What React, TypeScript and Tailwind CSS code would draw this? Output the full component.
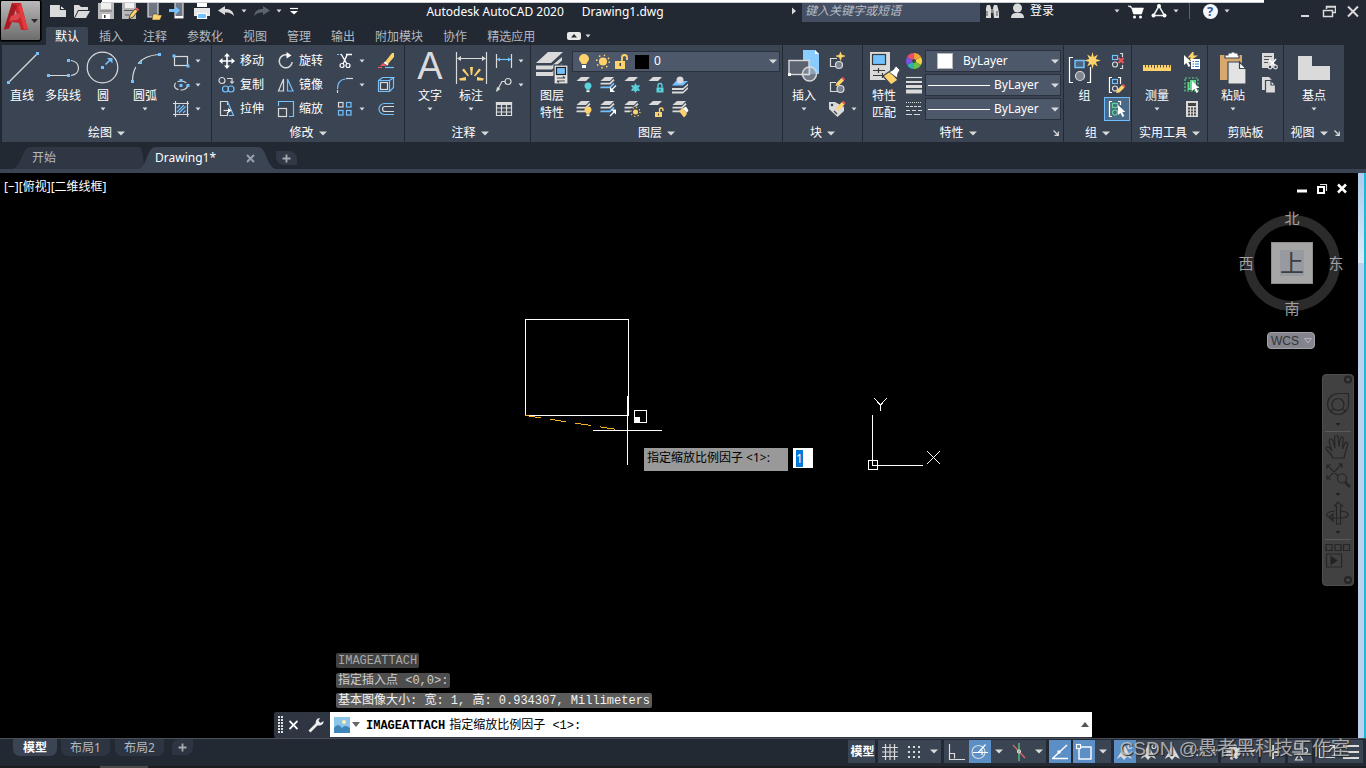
import { useEffect, useRef } from 'react'
import type { ReactNode } from 'react'
import clsx from 'clsx'

const BLUE = '#73c1ff'
const GREY = '#dadada'
const YELLOW = '#ffd36b'
const TEAL = '#5ad3dc'
const RED = '#f25555'
const GREEN = '#62d68a'
const PANEL = '#3b4453'

interface IcoProps {
  w?: number
  h?: number
  children: ReactNode
}

function Ico({ w = 20, h = 20, children }: IcoProps) {
  return (
    <svg
      width={w}
      height={h}
      viewBox={`0 0 ${w} ${h}`}
      fill="none"
      stroke={GREY}
      strokeWidth={1.2}
      className="shrink-0"
      aria-hidden="true"
    >
      {children}
    </svg>
  )
}

// Blue grip square
function Grip({ x, y }: { x: number; y: number }) {
  return <rect x={x - 1.5} y={y - 1.5} width={3} height={3} fill={BLUE} stroke="none" />
}

function Caret({ big }: { big?: boolean }) {
  return big ? (
    <Ico w={8} h={5}>
      <path d="M0 0.5h8l-4 4z" fill={GREY} stroke="none" />
    </Ico>
  ) : (
    <Ico w={6} h={4}>
      <path d="M0.5 0.5h5l-2.5 3z" fill={GREY} stroke="none" />
    </Ico>
  )
}

/* ---------- shared icon parts ---------- */

function Sheets({ x = 0, y = 0, bottom = GREY, count = 3 }: { x?: number; y?: number; bottom?: string; count?: number }) {
  return (
    <g transform={`translate(${x} ${y})`} strokeWidth={1.8}>
      <path d="M5 0h9l-4 4H0.500z" fill={GREY} stroke="none" />
      {count > 1 && <path d="M0.500 6.700h9.500l4-4" stroke={GREY} />}
      {count > 2 && <path d="M0.500 10.300h9.500l4-4" stroke={bottom} />}
    </g>
  )
}

function Bulb({ x, y, color }: { x: number; y: number; color: string }) {
  return (
    <g stroke="none">
      <path d={`M${x - 3.5} ${y}a3.500 3.500 0 1 1 7 0c0 1.800-1.800 2.200-1.800 3.800h-3.400c0-1.600-1.800-2-1.800-3.800z`} fill={color} />
      <rect x={x - 1.5} y={y + 4.3} width={3} height={1.8} fill="#fff" />
    </g>
  )
}

function Sun({ x, y, r = 2.5 }: { x: number; y: number; r?: number }) {
  return (
    <g stroke={YELLOW} strokeWidth={1.2}>
      <circle cx={x} cy={y} r={r + 3} fill={PANEL} stroke="none" />
      <circle cx={x} cy={y} r={r} fill={YELLOW} stroke="none" />
      <circle cx={x} cy={y} r={r + 2} strokeDasharray="1.2 2.330" />
    </g>
  )
}

function Lock({ x, y, color, open }: { x: number; y: number; color: string; open?: boolean }) {
  return (
    <g>
      <rect x={x} y={y} width={7} height={5} fill={color} stroke="none" />
      <path d={open ? `M${x + 4.5} ${y}v-2.500q0-1.500 1.700-1.500t1.800 1.500v1.500` : `M${x + 1.5} ${y}v-2q0-2 2-2t2 2v2`} stroke={color} strokeWidth={1.4} />
      <rect x={x + 3} y={y + 1.5} width={1} height={2} fill={PANEL} stroke="none" />
    </g>
  )
}

function Pencil({ x, y }: { x: number; y: number }) {
  return (
    <g transform={`translate(${x} ${y})`} stroke="none">
      <path d="M0 9l1-3 5-5 2.500 2.500-5 5z" fill={YELLOW} />
      <path d="M6 1l1-1q1.500 0 2.500 2.500l-1 1z" fill={RED} />
    </g>
  )
}

function Cursor({ x, y }: { x: number; y: number }) {
  return <path d={`M${x} ${y}v10l2.500-2 2 4 1.800-1-2-4h3z`} fill="#fff" stroke="none" />
}

/* ---------- ribbon building blocks ---------- */

function BigButton({ icon, label, label2, caret, className }: { icon: ReactNode; label: string; label2?: string; caret?: boolean; className: string }) {
  return (
    <button type="button" className={clsx('flex shrink-0 flex-col items-center text-white', className)}>
      <span className="flex h-[38px] items-start">{icon}</span>
      <span className="leading-[17px] whitespace-nowrap">{label}</span>
      {label2 && <span className="leading-[17px] whitespace-nowrap">{label2}</span>}
      {caret && (
        <span className="mt-[3px]">
          <Caret />
        </span>
      )}
    </button>
  )
}

interface SmallProps {
  icon: ReactNode
  title: string
  label?: string
  caret?: boolean
  active?: boolean
}

function Small({ icon, title, label, caret, active }: SmallProps) {
  return (
    <button type="button" aria-label={title} className="flex h-6 items-center text-white">
      <span className={clsx('flex w-6 justify-center', active && 'h-[22px] items-center bg-[#4b6a87] outline outline-[#6ebeff]')}>{icon}</span>
      {label && <span className="pl-px leading-[18px] whitespace-nowrap">{label}</span>}
      {caret && (
        <span className="pl-[2px]">
          <Caret />
        </span>
      )}
    </button>
  )
}

function Panel({ title, caret = true, launcher, className, children }: { title: string; caret?: boolean; launcher?: boolean; className: string; children: ReactNode }) {
  return (
    <section className={clsx('flex h-[97px] shrink-0 flex-col bg-[#3b4453]', className)}>
      <div className="flex h-[79px] pt-1">{children}</div>
      <footer className="flex h-[18px] items-center">
        <button type="button" className="flex flex-1 items-center justify-center gap-[5px] whitespace-nowrap text-white">
          {title}
          {caret && <Caret big />}
        </button>
        {launcher && (
          <button type="button" aria-label={`${title}设置`} className="pr-1">
            <Ico w={6} h={6}>
              <path d="M0.500 0.500l4 4M5.300 1.500v3.800H1.500" />
            </Ico>
          </button>
        )}
      </footer>
    </section>
  )
}

function DrawPanel() {
  return (
    <Panel title="绘图" className="w-[209px]">
      <BigButton className="w-[40px]" label="直线" icon={
        <Ico w={40} h={38}>
          <path d="M6.500 33.500l29-29" />
          <Grip x={6.5} y={33.5} />
          <Grip x={35.5} y={4.500} />
        </Ico>
      } />
      <BigButton className="w-[42px]" label="多段线" icon={
        <Ico w={42} h={38}>
          <path d="M6 26.500h20M29 11.500c10 1.500 10 13.500 0 15" />
          <Grip x={6.5} y={26.5} />
          <Grip x={26.5} y={26.5} />
          <Grip x={26.5} y={11.5} />
        </Ico>
      } />
      <BigButton className="w-[38px]" label="圆" caret icon={
        <Ico w={38} h={38}>
          <circle cx={18.5} cy={18.5} r={15.300} />
          <Grip x={18.5} y={18.5} />
          <path d="M21.500 15.500l5-5" stroke={BLUE} strokeWidth={1.6} />
          <path d="M28.500 9v5.500L23 9z" fill={BLUE} stroke="none" />
        </Ico>
      } />
      <BigButton className="w-[46px]" label="圆弧" caret icon={
        <Ico w={46} h={38}>
          <path d="M10.500 32.500C10.500 16 20 6.500 37 5.500" strokeDasharray="15 4 30" />
          <Grip x={10.5} y={32.5} />
          <Grip x={18.5} y={13.5} />
          <Grip x={37.5} y={5.5} />
        </Ico>
      } />
      <div className="pl-px">
        <Small title="矩形" caret icon={
          <Ico>
            <rect x={3.5} y={5.5} width={13} height={9} />
            <Grip x={3} y={5} />
            <Grip x={17} y={15} />
          </Ico>
        } />
        <Small title="椭圆" caret icon={
          <Ico>
            <ellipse cx={10} cy={10.5} rx={6.500} ry={4.5} strokeDasharray="9 2" />
            <Grip x={10} y={5.5} />
            <Grip x={10} y={10.5} />
            <Grip x={17} y={10.5} />
          </Ico>
        } />
        <Small title="图案填充" caret icon={
          <Ico>
            <path d="M4.500 2v16M16.500 2v16M2 4.500h16M2 15.500h16" />
            <path d="M6 9l3-3M6 13l7-7M8 14l6.500-6.500M12 14l2.500-2.500" stroke={BLUE} />
          </Ico>
        } />
      </div>
    </Panel>
  )
}

function ModifyPanel() {
  return (
    <Panel title="修改" className="w-[192px]">
      <div className="w-[59px] pl-[3px]">
        <Small title="移动" label="移动" icon={
          <Ico w={16} h={16}>
            <path d="M8 2v12M2 8h12" strokeWidth={1.6} stroke="#fff" />
            <path d="M8 0l3 3.500H5zM8 16l3-3.500H5zM0 8l3.500-3v6zM16 8l-3.500-3v6z" fill="#fff" stroke="none" />
          </Ico>
        } />
        <Small title="复制" label="复制" icon={
          <Ico w={18} h={18}>
            <circle cx={4} cy={4.5} r={3} />
            <path d="M9 2.500h5v4" />
            <path d="M11.500 5.500h5L14 8z" fill={GREY} stroke="none" />
            <circle cx={7.5} cy={13} r={3} stroke={BLUE} />
            <circle cx={13} cy={13} r={3} stroke={BLUE} />
          </Ico>
        } />
        <Small title="拉伸" label="拉伸" icon={
          <Ico w={18} h={18}>
            <path d="M9.500 5V1.500h-7v14h7V12" />
            <path d="M9.500 1.500l6 14H11" stroke={BLUE} />
            <path d="M5.500 10.500h6" />
            <path d="M10 8l3.500 2.500L10 13z" fill="#fff" stroke="none" />
          </Ico>
        } />
      </div>
      <div className="w-[59px] pl-[3px]">
        <Small title="旋转" label="旋转" icon={
          <Ico w={18} h={18}>
            <path d="M11 3.200A6.500 6.500 0 1 0 15.200 10" strokeWidth={1.5} />
            <path d="M9.500 0l5 3.500-5 3z" fill="#fff" stroke="none" />
          </Ico>
        } />
        <Small title="镜像" label="镜像" icon={
          <Ico w={18} h={18}>
            <path d="M6.500 3v12H1.500z" />
            <path d="M10.500 3v12h5.500z" stroke={BLUE} />
          </Ico>
        } />
        <Small title="缩放" label="缩放" icon={
          <Ico w={18} h={18}>
            <path d="M1.500 6V1.500h15v15H12" stroke={BLUE} />
            <rect x={1.5} y={8.500} width={8} height={8} />
          </Ico>
        } />
      </div>
      <div className="w-[41px] pl-[3px]">
        <Small title="修剪" caret icon={
          <Ico w={18} h={18}>
            <path d="M1 2.500h4" stroke={BLUE} strokeDasharray="2 1" />
            <path d="M10 2.500h6M5 2l6 10M11 3l-4 9" stroke="#fff" strokeWidth={1.4} />
            <circle cx={6} cy={13.500} r={2} stroke="#fff" />
            <circle cx={12} cy={13.500} r={2} stroke="#fff" />
          </Ico>
        } />
        <Small title="圆角" caret icon={
          <Ico w={18} h={18}>
            <path d="M1.500 17v-3" />
            <path d="M1.500 13c0-6 3-9.500 8-10" stroke={BLUE} />
            <path d="M10 2.500h7" />
          </Ico>
        } />
        <Small title="阵列" caret icon={
          <Ico w={18} h={18}>
            <rect x={2.500} y={2.500} width={4.500} height={4.500} />
            <rect x={10.500} y={2.500} width={4.500} height={4.500} stroke={BLUE} />
            <rect x={2.500} y={10.500} width={4.500} height={4.500} stroke={BLUE} />
            <rect x={10.500} y={10.500} width={4.500} height={4.500} stroke={BLUE} />
          </Ico>
        } />
      </div>
      <div className="pl-[3px]">
        <Small title="删除" icon={
          <Ico w={18} h={18}>
            <path d="M8 10l7-9h2v4l-6 7z" fill={YELLOW} stroke="none" />
            <path d="M8 9.500l3.500 2.500-1 1.500-4-2.500z" fill="#fff" stroke="none" />
            <path d="M3 14l3-3 4 3z" fill={RED} stroke="none" />
            <path d="M1 15.500h4" stroke={RED} />
            <path d="M8 15.500h9" stroke={BLUE} />
          </Ico>
        } />
        <Small title="分解" icon={
          <Ico w={18} h={18}>
            <rect x={3.500} y={6.500} width={7} height={7} />
            <path d="M1.500 4.500h11v11h-11zM1.500 4.500l4-3h11l-4 3M16.500 1.500v10l-4 4" stroke={BLUE} />
          </Ico>
        } />
        <Small title="偏移" icon={
          <Ico w={18} h={18}>
            <path d="M17 3.500H7.500a5.500 5.500 0 0 0 0 11H17" stroke={BLUE} />
            <path d="M17 6.500H8a2.500 2.500 0 0 0 0 5h9" />
          </Ico>
        } />
      </div>
    </Panel>
  )
}

function AnnotatePanel() {
  return (
    <Panel title="注释" className="w-[125px] pl-[5px]">
      <BigButton className="w-[40px]" label="文字" caret icon={
        <span className="font-['Liberation_Sans',sans-serif] text-[38px] leading-[35px] text-[#dadada]">A</span>
      } />
      <BigButton className="w-[42px]" label="标注" caret icon={
        <Ico w={36} h={38}>
          <path d="M3.500 3v32M33.500 3v32M5 9.500h27" />
          <path d="M4 9.500l4-2.500v5zM33 9.500l-4-2.500v5z" fill={GREY} stroke="none" />
          <g fill={YELLOW} stroke="none">
            <path d="M17 18h3l-0.800 8h-1.400zM9 21l2-1.500 5 7-1 1zM28 21l-2-1.500-5 7 1 1zM6 29.500l7-1.500v3.500H7zM31 29.500l-7-1.500v3.500h6z" />
          </g>
        </Ico>
      } />
      <div>
        <Small title="线性" caret icon={
          <Ico w={18} h={18}>
            <path d="M1.500 2v14M16.500 2v14" />
            <path d="M2 7.500h14" stroke={BLUE} />
            <path d="M2 7.500l3-2v4zM16 7.500l-3-2v4z" fill={BLUE} stroke="none" />
          </Ico>
        } />
        <Small title="引线" caret icon={
          <Ico w={18} h={18}>
            <circle cx={13} cy={5.500} r={3} />
            <path d="M10 5.500H7L3 13" />
            <path d="M1 16l1-5 3.500 2z" fill={GREY} stroke="none" />
          </Ico>
        } />
        <Small title="表格" icon={
          <Ico w={18} h={18}>
            <path d="M1.500 2.500h15v13h-15zM1.500 8h15M1.500 12h15M6.500 5v10.500M11.500 5v10.500" />
            <path d="M1.500 2.500h15v2h-15z" fill={GREY} />
          </Ico>
        } />
      </div>
    </Panel>
  )
}

function LayerPanel() {
  return (
    <Panel title="图层" className="w-[251px]">
      <BigButton className="ml-px w-[40px]" label="图层" label2="特性" icon={
        <Ico w={36} h={38}>
          <g fill={GREY} stroke="none">
            <path d="M14 3h15L17 14H2z" />
            <path d="M2 16.500h16L28 8v3.500L18 20.500H2z" />
            <path d="M2 23h16l10-8.500V18l-9 9H2z" />
          </g>
          <rect x={20} y={16} width={14} height={19} fill="#e4e4e4" stroke={PANEL} />
          <rect x={22.500} y={18.500} width={9} height={7} fill={BLUE} stroke="#222" />
          <path d="M23 29h8M23 32h8M29 27.500l2 1.500M25 33.500L23 32" stroke="#444" />
        </Ico>
      } />
      <div>
        <label className="flex h-6 items-center">
          <span className="flex h-[21px] w-[208px] items-center border border-[#2a313c] bg-[#4d586b] pl-[5px]">
            <Ico w={76} h={19}>
              <g stroke="none">
                <path d="M1 7a5 5 0 1 1 10 0c0 2.500-2.500 3-2.500 5h-5C3.500 10 1 9.500 1 7z" fill={YELLOW} />
                <rect x={4} y={13} width={4} height={3} fill="#fff" />
              </g>
              <circle cx={25} cy={9.500} r={4} fill={YELLOW} stroke="none" />
              <circle cx={25} cy={9.500} r={6.300} stroke={YELLOW} strokeWidth={1.6} strokeDasharray="1.500 3.450" />
              <rect x={37} y={9} width={10} height={8} fill={YELLOW} stroke="none" />
              <path d="M44 9V5.500q0-2.500 2.500-2.500T49 5.500V8" stroke={YELLOW} strokeWidth={1.8} />
              <rect x={41.500} y={11} width={1.500} height={3} fill={PANEL} stroke="none" />
              <rect x={57} y={3} width={14} height={14} fill="#000" stroke="none" />
            </Ico>
            <select aria-label="图层" className="h-full flex-1 appearance-none bg-transparent text-white outline-none">
              <option>0</option>
            </select>
            <span className="pr-[2px]">
              <Caret big />
            </span>
          </span>
        </label>
        <div className="flex">
          <Small title="关" icon={<Ico w={18} h={18}><Sheets count={1} y={1} x={1} /><Bulb x={13} y={10} color={TEAL} /></Ico>} />
          <Small title="隔离" icon={<Ico w={18} h={18}><Sheets bottom={BLUE} x={1} y={1} /><path d="M17 9.500l-4 4" stroke="#fff" /><path d="M11 16v-5l5 5z" fill="#fff" stroke="none" /></Ico>} />
          <Small title="冻结" icon={<Ico w={18} h={18}><Sheets count={1} y={1} x={1} /><path d="M12.500 7.500v9M8.500 9.500l8 5M16.500 9.500l-8 5" stroke={TEAL} strokeWidth={1.500} /><circle cx={12.500} cy={12} r={2.500} stroke={TEAL} /></Ico>} />
          <Small title="锁定" icon={<Ico w={18} h={18}><Sheets count={1} y={1} x={1} /><Lock x={9.500} y={11.500} color={TEAL} /></Ico>} />
          <Small title="置为当前" icon={
            <Ico w={18} h={18}>
              <g stroke="none">
                <path d="M5 5h12l-5 4.500H1z" fill={BLUE} />
                <circle cx={9} cy={4} r={3.500} fill={GREY} />
                <path d="M1 12h11l5-4.500v2L12 14H1zM1 15.500h11l5-4.500v2L12 17.500H1z" fill={GREY} />
              </g>
            </Ico>
          } />
        </div>
        <div className="flex">
          <Small title="打开所有图层" icon={<Ico w={18} h={18}><Sheets x={1} y={1} /><Bulb x={13} y={10} color={YELLOW} /></Ico>} />
          <Small title="取消隔离" icon={<Ico w={18} h={18}><Sheets bottom={BLUE} x={1} y={1} /><path d="M11 16l4-4" stroke="#fff" /><path d="M17 9.500v5l-5-5z" fill="#fff" stroke="none" /></Ico>} />
          <Small title="解冻所有图层" icon={<Ico w={18} h={18}><Sheets x={1} y={1} /><Sun x={12.5} y={12} /></Ico>} />
          <Small title="解锁" icon={<Ico w={18} h={18}><Sheets count={1} y={1} x={1} /><Lock x={8} y={12} color={YELLOW} open /></Ico>} />
          <Small title="匹配图层" icon={<Ico w={18} h={18}><Sheets x={1} y={1} /><path d="M8 11l3.500-3 4.500 6-3 3.500z" fill={YELLOW} stroke="none" /><path d="M12 8.500l3-2 2.500 4-2 2.500z" fill="#fff" stroke="none" /></Ico>} />
        </div>
      </div>
    </Panel>
  )
}

function BlockPanel() {
  return (
    <Panel title="块" className="w-[79px]">
      <BigButton className="w-[42px]" label="插入" caret icon={
        <Ico w={36} h={38}>
          <path d="M17 1h12l4 4v20H17z" fill="#8accff" stroke="none" />
          <path d="M29 1v4h4z" fill="#fff" stroke="none" />
          <rect x={3} y={11.500} width={20} height={14} fill="#5b6270" strokeWidth={1.4} />
          <circle cx={23.500} cy={25} r={7} fill="#8b93a0" fillOpacity={0.7} strokeWidth={1.4} />
          <path d="M15 25.500h8.500V17" strokeWidth={1.400} />
          <rect x={2} y={24} width={3} height={3} fill="#fff" stroke="none" />
        </Ico>
      } />
      <div>
        <Small title="创建块" icon={
          <Ico w={18} h={18}>
            <path d="M9 6.500H2.500v8H10" />
            <circle cx={11} cy={13} r={3.500} fill="#7a8290" />
            <path d="M12.500 0l1 3 3.500 1-3.500 1.300-1 3.200-1-3.200L8 4l3.500-1z" fill={YELLOW} stroke={YELLOW} strokeWidth={0.6} />
          </Ico>
        } />
        <Small title="块编辑器" icon={
          <Ico w={18} h={18}>
            <path d="M8 6.500H2.500v9H10" />
            <circle cx={12.500} cy={13} r={3.500} fill="#7a8290" />
            <Pencil x={7.500} y={1} />
          </Ico>
        } />
        <Small title="编辑属性" caret icon={
          <Ico w={18} h={18}>
            <path d="M1 2h6l9 5v4l-6.500 6L1 9z" fill={GREY} stroke="none" />
            <circle cx={4} cy={5} r={1.300} fill={PANEL} stroke="none" />
            <path d="M6 11l3 3" stroke="#444" />
            <Pencil x={8} y={1} />
          </Ico>
        } />
      </div>
    </Panel>
  )
}

function PropSelect({ label, swatch }: { label: string; swatch?: boolean }) {
  return (
    <span className="flex h-[22px] w-[136px] items-center border border-[#2a313c] bg-[#4d586b]">
      {swatch ? (
        <span className="mr-[10px] ml-[11px] size-4 border border-[#b8b8b8] bg-white" />
      ) : (
        <span className="mr-1 ml-[2px] h-px w-[62px] bg-white" />
      )}
      <select aria-label={label} className="h-full flex-1 appearance-none bg-transparent text-white outline-none">
        <option>ByLayer</option>
      </select>
      <span className="pr-px">
        <Caret big />
      </span>
    </span>
  )
}

function PropertyPanel() {
  const wheel = ['#f6a03c', '#f2d13c', '#6cc04a', '#2fb3a8', '#7d4fe0', '#e8506a']
  return (
    <Panel title="特性" launcher className="w-[200px]">
      <BigButton className="w-[42px]" label="特性" label2="匹配" icon={
        <Ico w={36} h={38}>
          <rect x={4} y={3} width={20} height={28} fill={GREY} stroke="none" />
          <rect x={6.500} y={5.500} width={13} height={10} fill={BLUE} stroke="#3a3a3a" />
          <path d="M7 21.500h12M7 26.500h12M12.500 19v5M16.500 24v5" stroke="#3a3a3a" />
          <path d="M17 27l7-5 8 9-7 5z" fill={YELLOW} stroke={PANEL} />
          <path d="M23 23l4-2 3-4 4 4-2 3-1 5z" fill="#fff" stroke={PANEL} strokeWidth={0.800} />
        </Ico>
      } />
      <div className="w-5">
        <div className="flex h-6 items-center">
          <Ico w={18} h={18}>
            {wheel.map((color, i) => (
              <path key={color} d="M9 9V1a8 8 0 0 1 6.930 4z" fill={color} stroke="none" transform={`rotate(${i * 60} 9 9)`} />
            ))}
            <circle cx={9} cy={9} r={2} fill={PANEL} stroke="none" />
          </Ico>
        </div>
        <div className="flex h-6 items-center">
          <Ico w={18} h={18}>
            <path d="M1 1.500h16" />
            <path d="M1 6h16" strokeWidth={2} />
            <path d="M1 10.500h16" strokeWidth={3} />
            <path d="M1 15.500h16" strokeWidth={4} />
          </Ico>
        </div>
        <div className="flex h-6 items-center">
          <Ico w={18} h={18}>
            <path d="M1 2.500h16" strokeDasharray="1 1" />
            <path d="M1 6.500h16" strokeDasharray="3 1" />
            <path d="M1 10.500h16" strokeDasharray="4 2" />
            <path d="M1 14.500h16" strokeDasharray="6 2" />
          </Ico>
        </div>
      </div>
      <div className="flex flex-col gap-[2px] pt-px">
        <PropSelect label="对象颜色" swatch />
        <PropSelect label="线宽" />
        <PropSelect label="线型" />
      </div>
    </Panel>
  )
}

function GroupPanel() {
  const pair = (color: string) => (
    <>
      <rect x={4.500} y={3.500} width={5} height={4} stroke={color} />
      <circle cx={7} cy={12.500} r={2.500} stroke={color === GREEN ? GREEN : GREY} />
    </>
  )
  return (
    <Panel title="组" className="w-[67px]">
      <BigButton className="w-[41px]" label="组" icon={
        <Ico w={36} h={38}>
          <path d="M6 8.500H2.500v25H6M20 33.500h3.500V18" stroke="#fff" />
          <rect x={8} y={11.500} width={9} height={7} stroke={BLUE} fill="#4c6580" strokeWidth={1.500} />
          <circle cx={13} cy={27} r={4.500} fill="#7e8490" />
          <path d="M25.500 3l1.300 5 4-2.500-2 4.500 5 1.500-5 1.500 2 4.500-4-2.500-1.300 5-1.300-5-4 2.500 2-4.500-5-1.500 5-1.500-2-4.500 4 2.500z" fill={YELLOW} stroke="none" />
        </Ico>
      } />
      <div>
        <Small title="解除编组" icon={
          <Ico w={18} h={18}>
            {pair(BLUE)}
            <path d="M12 1.500h2.500V5M14.500 13v3.500H12" />
            <path d="M10.500 6l5 5M15.500 6l-5 5" stroke={RED} strokeWidth={2} />
          </Ico>
        } />
        <Small title="组编辑" icon={
          <Ico w={18} h={18}>
            {pair(BLUE)}
            <path d="M4 1.500H1.500v15H4M10 1.500h2.500V8" stroke="#fff" />
            <Pencil x={8} y={8} />
          </Ico>
        } />
        <Small title="启用/禁用组选择" active icon={
          <Ico w={18} h={18}>
            {pair(GREEN)}
            <path d="M4 1.500H1.500v15H4M10 1.500h2.500V5" stroke="#fff" />
            <Cursor x={10} y={5} />
          </Ico>
        } />
      </div>
    </Panel>
  )
}

function UtilPanel() {
  return (
    <Panel title="实用工具" className="w-[75px]">
      <BigButton className="ml-[3px] w-[44px]" label="测量" caret icon={
        <Ico w={36} h={38}>
          <rect x={4} y={16} width={28} height={6} fill={YELLOW} stroke="none" />
          <path d="M6.500 16v2.500M9.500 16v2.500M12.500 16v2.500M15.500 16v3.500M18.500 16v2.500M21.500 16v2.500M24.500 16v2.500M27.500 16v2.500M30.500 16v2.500" stroke="#5a5140" strokeWidth={1} />
        </Ico>
      } />
      <div className="pl-px">
        <Small title="快速选择" icon={
          <Ico w={18} h={18}>
            <path d="M10 0L6 5h3L7 8l6-4h-3z" fill={YELLOW} stroke={YELLOW} />
            <rect x={8} y={7} width={9} height={10} fill="#fff" stroke="none" />
            <path d="M9.500 9.500h1.500M12 9.500h4M9.500 12h1.500M12 12h4M9.500 14.500h1.500M12 14.500h4" stroke="#2f7fc4" />
            <Cursor x={1} y={3} />
          </Ico>
        } />
        <Small title="全部选择" icon={
          <Ico w={18} h={18}>
            <rect x={2} y={2} width={13} height={13} stroke={GREEN} strokeDasharray="2 1.500" />
            <rect x={7} y={4} width={6} height={8} fill={GREEN} stroke="none" />
            <path d="M5.500 6v7H10" stroke={GREEN} strokeWidth={2} />
            <Cursor x={9} y={5} />
          </Ico>
        } />
        <Small title="快速计算器" icon={
          <Ico w={18} h={18}>
            <rect x={3} y={1} width={12} height={16} fill={GREY} stroke="none" />
            <path d="M5 4.500h8" stroke="#444" strokeWidth={3} />
            <path d="M5 8.500h8M5 11.500h8M5 14.500h8" stroke="#444" strokeWidth={2} strokeDasharray="2 1" />
          </Ico>
        } />
      </div>
    </Panel>
  )
}

function ClipboardPanel() {
  return (
    <Panel title="剪贴板" caret={false} className="w-[75px]">
      <BigButton className="ml-1 w-[42px]" label="粘贴" caret icon={
        <Ico w={36} h={38}>
          <g stroke="none">
            <path d="M5 6h22v25H5z" fill="#d9a86c" />
            <path d="M10 6h3V4h3V3h4v1h3v2h1v3H10z" fill="#fff" stroke={PANEL} />
            <path d="M13 13h11l7 7v15H13z" fill="#e3e3e3" stroke={PANEL} />
            <path d="M24.500 13v6.500H31z" fill="#fff" stroke={PANEL} />
          </g>
        </Ico>
      } />
      <div className="pl-[3px]">
        <Small title="剪切" icon={
          <Ico w={18} h={18}>
            <rect x={2} y={1} width={12} height={15} fill={GREY} stroke="none" />
            <path d="M4 4.500h8M4 7.500h5M4 10.500h4" stroke="#555" />
            <path d="M9 8l7 6M16 7l-6 7" stroke="#fff" strokeWidth={1.5} />
            <circle cx={10} cy={15} r={1.800} fill={PANEL} />
            <circle cx={15.500} cy={15} r={1.800} fill={PANEL} />
          </Ico>
        } />
        <Small title="复制剪裁" icon={
          <Ico w={18} h={18}>
            <path d="M2 1h7l3 3v10H2z" fill={GREY} stroke="none" />
            <path d="M5.500 4.500H11l4.500 4.500v8h-10z" fill={GREY} stroke={PANEL} />
            <path d="M11 4.500V9h4.500z" fill="#fff" stroke={PANEL} />
          </Ico>
        } />
      </div>
    </Panel>
  )
}

/* ---------- title bar ---------- */

function QuickButton({ title, w = 24, children }: { title: string; w?: 24 | 12 | 10 | 20; children: ReactNode }) {
  return (
    <button
      type="button"
      aria-label={title}
      className={clsx('flex h-full shrink-0 items-center justify-center', w === 24 && 'w-6', w === 12 && 'w-3', w === 10 && 'w-[10px]', w === 20 && 'w-5')}
    >
      {children}
    </button>
  )
}

function TitleBar() {
  return (
    <div className="flex h-[22px] items-center">
      <div className="flex h-full pl-px">
        <QuickButton title="新建"><Ico w={18} h={18}><path d="M1 3h10l6 5v7H1z" fill={GREY} stroke="none" /><path d="M11.500 3v4.500H17z" fill="#fff" stroke="#222933" /></Ico></QuickButton>
        <QuickButton title="打开"><Ico w={18} h={18}><path d="M1 3h5l2 2h7v3H5l-4 8z" fill={GREY} stroke="none" /><path d="M5.500 9H17l-4 7H2z" fill={GREY} stroke="none" /></Ico></QuickButton>
        <QuickButton title="保存"><Ico w={18} h={18}><path d="M1 1h16v16H1z" fill="#b9b9b9" stroke="none" /><path d="M4 0h10v7H4z" fill="#f0f0f0" stroke="none" /><path d="M3 9h12" stroke="#777" /><path d="M5 12h8v5H5z" fill="#fff" stroke="none" /><path d="M7 13h1.500v3H7z" fill="#333" stroke="none" /></Ico></QuickButton>
        <QuickButton title="另存为"><Ico w={18} h={18}><path d="M1 1h14v16H1z" fill="#b9b9b9" stroke="none" /><path d="M4 0h9v6H4z" fill="#f0f0f0" stroke="none" /><path d="M3 8.500h9M4 13h4" stroke="#555" /><path d="M8 17l1-4 5-6 3 2-5 6z" fill={YELLOW} stroke="#222933" strokeWidth={0.800} /><path d="M14 7l1.500-1.500 3 2L17 9z" fill={RED} stroke="none" /></Ico></QuickButton>
        <QuickButton title="从移动设备打开"><Ico w={18} h={18}><path d="M3 0h10v15H3z" fill="#707782" /><path d="M8 12h4l1 1h4l-2 5H7z" fill={YELLOW} stroke="#222933" strokeWidth={0.500} /></Ico></QuickButton>
        <QuickButton title="保存到移动设备"><Ico w={18} h={18}><path d="M6 0h8v16H6z" fill="#707782" /><path d="M0 7h6V4l5 4.500L6 13v-3H0z" fill={BLUE} stroke="none" /><path d="M6 14h8v2H6z" fill="#fff" stroke="none" /></Ico></QuickButton>
        <QuickButton title="打印"><Ico w={18} h={18}><path d="M4 0h10v5H4z" fill="#fff" stroke="none" /><path d="M1 6h16v8h-3v-3H4v3H1z" fill="#e8e8e8" stroke="none" /><path d="M4.500 11.500h9v5h-9z" fill={BLUE} stroke="#fff" /></Ico></QuickButton>
        <QuickButton title="放弃"><Ico w={18} h={18}><path d="M1 8.500L8 4v3c5 0 8 1.500 9 7-3-3-5-3.500-9-3.500V13z" fill={GREY} stroke="none" /></Ico></QuickButton>
        <QuickButton title="放弃列表" w={12}><Caret /></QuickButton>
        <QuickButton title="重做"><Ico w={18} h={18}><path d="M17 8.500L10 4v3c-5 0-8 1.500-9 7 3-3 5-3.500 9-3.500V13z" fill="#5d636d" stroke="none" /></Ico></QuickButton>
        <QuickButton title="重做列表" w={10}><Caret /></QuickButton>
        <QuickButton title="自定义快速访问工具栏" w={20}><Ico w={10} h={8}><path d="M1 1.500h8" stroke="#fff" /><path d="M1 4h8l-4 3.500z" fill="#fff" stroke="none" /></Ico></QuickButton>
      </div>

      <h1 className="flex flex-1 justify-center gap-[18px] pt-[2px] whitespace-nowrap text-white">
        <span>Autodesk AutoCAD 2020</span>
        <span>Drawing1.dwg</span>
      </h1>

      <div className="flex h-full items-center text-white">
        <Ico w={16} h={8}><path d="M6 0.500l4 3.500-4 3.500z" fill={GREY} stroke="none" /></Ico>
        <input
          type="search"
          aria-label="搜索"
          placeholder="键入关键字或短语"
          className="h-[22px] w-[178px] bg-[#454f63] px-[3px] pb-[2px] italic outline-none placeholder:text-[#b8bec8]"
        />
        <QuickButton title="查找"><Ico w={18} h={18}><path d="M3 6l1-3h3l1 3v10H3v-5zM10 6l1-3h3l1 3 1 5v5h-5z" fill={GREY} stroke="none" /><path d="M8 7h2v4H8z" fill="#888" stroke="none" /><path d="M4 9v5M14 9v5" stroke="#666" /></Ico></QuickButton>
        <button type="button" className="flex h-full items-center gap-1 pl-1">
          <Ico w={18} h={18}><circle cx={9.500} cy={6} r={4.500} fill={GREY} stroke="none" /><path d="M3 16q0-5 5-5h3q5 0 5 5z" fill={GREY} stroke="none" /></Ico>
          登录
        </button>
        <span className="w-[57px]" />
        <QuickButton title="登录菜单" w={12}><Caret /></QuickButton>
        <QuickButton title="Autodesk App Store"><Ico w={18} h={18}><path d="M2 4h3l2.500 8h8l2-6H6z" fill="#fff" stroke="#fff" strokeWidth={0.600} /><circle cx={8.500} cy={15} r={1.500} fill="#fff" stroke="none" /><circle cx={14.500} cy={15} r={1.500} fill="#fff" stroke="none" /></Ico></QuickButton>
        <QuickButton title="保持连接"><Ico w={18} h={18}><path d="M9 4L3.500 13.500h11z" stroke="#e6e9ef" strokeWidth={1.600} /><circle cx={9} cy={4} r={2} fill="#fff" stroke="none" /><circle cx={3.500} cy={13.500} r={2} fill="#fff" stroke="none" /><circle cx={14.500} cy={13.500} r={2} fill="#fff" stroke="none" /></Ico></QuickButton>
        <QuickButton title="连接菜单" w={10}><Caret /></QuickButton>
        <span className="mx-2 h-4 w-px bg-[#5c6470]" />
        <QuickButton title="帮助">
          <span className="flex size-[15px] items-center justify-center rounded-full bg-[#f4f6fa] text-[13px] leading-[15px] font-bold text-[#2b57a5]">?</span>
        </QuickButton>
        <QuickButton title="帮助菜单" w={10}><Caret /></QuickButton>
        <span className="w-[61px]" />
        <QuickButton title="最小化"><Ico w={14} h={14}><path d="M3 12h8" strokeWidth={2} /></Ico></QuickButton>
        <QuickButton title="还原"><Ico w={14} h={14}><path d="M4.500 5V2.500h9v6H11M4 3h10" strokeWidth={1.500} /><path d="M1.500 6.500h9v6h-9zM1 6.500h10" strokeWidth={1.500} /></Ico></QuickButton>
        <QuickButton title="关闭"><Ico w={14} h={14}><path d="M2 2.500l10 10M12 2.500l-10 10" strokeWidth={2} /></Ico></QuickButton>
        <span className="w-px" />
      </div>
    </div>
  )
}

function AppButton() {
  return (
    <button
      type="button"
      aria-label="应用程序菜单"
      className="flex h-[41px] w-[41px] items-start rounded-[2px] border border-black bg-linear-to-b from-[#b9b9b9] to-[#6d6d6d] outline outline-[#0e1116]"
    >
      <Ico w={39} h={38}>
        <g stroke="none">
          <path d="M11 2h9l7 27h-7l-2-7-7-1-3 7H3z" fill="#c9252c" />
          <path d="M11 2l5 3-8 22-5 2z" fill="#a81a22" />
          <path d="M14.500 9l3 9-6 1z" fill="#9a9a9a" />
          <path d="M10 15l8-3 2 4-12 5z" fill="#e0444a" />
          <path d="M20 2l7 27-4-1-6-22z" fill="#e23b40" />
          <path d="M30 18h7l-3.500 4z" fill="#2c2c2c" />
        </g>
      </Ico>
    </button>
  )
}

const RIBBON_TABS = ['插入', '注释', '参数化', '视图', '管理', '输出', '附加模块', '协作', '精选应用']

function RibbonTabs() {
  return (
    <nav className="flex h-[18px] items-center text-[#b4b9c1]">
      <button type="button" className="ml-px h-full w-[42px] rounded-t-[2px] bg-[#3b4453] leading-[17px] text-white">默认</button>
      <span className="w-px" />
      {RIBBON_TABS.map((tab) => (
        <button key={tab} type="button" className="h-full px-[10px] leading-[17px] whitespace-nowrap">{tab}</button>
      ))}
      <button type="button" aria-label="最小化功能区" className="flex items-center gap-1 pb-px pl-[22px]">
        <Ico w={14} h={8}>
          <rect x={0} y={0} width={14} height={8} rx={2} fill="#e8e8e8" stroke="none" />
          <path d="M4 5.500h6L7 2z" fill="#222933" stroke="none" />
        </Ico>
        <Caret />
      </button>
    </nav>
  )
}

/* ---------- document tabs ---------- */

function DocTabs() {
  return (
    <div className="flex h-[27px] items-end pl-[12px]">
      <button type="button" className="relative flex h-[22px] w-[134px] items-center pl-5 text-[#b4b9c1]">
        <svg className="absolute inset-0 size-full" viewBox="0 0 134 22" preserveAspectRatio="none" aria-hidden="true">
          <path d="M0 22C10 20 10 0 18 0h108c7 0 4 20 8 22z" fill="#2f3744" />
        </svg>
        <span className="relative">开始</span>
      </button>
      <div className="relative flex h-[22px] w-[130px] items-center pl-[9px] text-white">
        <svg className="absolute inset-y-0 -left-2 h-full w-[138px]" viewBox="0 0 138 22" preserveAspectRatio="none" aria-hidden="true">
          <path d="M0 22C10 20 8 0 18 0h102c9 0 8 20 18 22z" fill="#3b4453" />
        </svg>
        <button type="button" className="relative">Drawing1*</button>
        <button type="button" aria-label="关闭" className="relative ml-[30px]">
          <Ico w={9} h={9}><path d="M1 1l7 7M8 1l-7 7" stroke="#9aa0aa" strokeWidth={2} /></Ico>
        </button>
      </div>
      <button type="button" aria-label="新图形" className="mb-1 flex h-[14px] w-[21px] items-center justify-center rounded-tr-[8px] rounded-bl-[8px] bg-[#313946]">
        <Ico w={9} h={9}><path d="M4.500 0.500v8M0.500 4.500h8" stroke="#a5a9b0" strokeWidth={1.800} /></Ico>
      </button>
    </div>
  )
}

/* ---------- drawing area ---------- */

function ViewCube() {
  return (
    <div className="absolute top-[36px] right-5 size-[108px] text-[15px] text-[#a0a0a0]">
      <div className="absolute inset-[6px] rounded-full border-[10px] border-[#2b2b2b]" />
      <button type="button" className="absolute inset-[33px] flex items-center justify-center border border-[#8d8d8d] bg-[#a6a6a6] text-[24px] leading-[26px] text-[#3c3e42]">
        <span className="bg-[#979ba1]">上</span>
      </button>
      <button type="button" className="absolute inset-x-0 top-0 mx-auto w-5 leading-[18px]">北</button>
      <button type="button" className="absolute inset-x-0 bottom-0 mx-auto w-5 leading-[18px]">南</button>
      <button type="button" className="absolute inset-y-0 left-0 w-4 leading-[18px]">西</button>
      <button type="button" className="absolute inset-y-0 right-0 w-5 leading-[18px]">东</button>
    </div>
  )
}

function NavBar() {
  return (
    <div className="absolute top-[201px] right-3 rounded-[4px] border border-[#4e4e4e] bg-[#414141]">
      <svg width={30} height={210} viewBox="0 0 30 210" fill="none" stroke="#262626" strokeWidth={1.2} role="img" aria-label="导航栏">
        <circle cx={25} cy={4.500} r={3.500} fill="#2a2a2a" />
        <path d="M23.500 3l3 3M26.500 3l-3 3" stroke="#666" strokeWidth={0.800} />
        <path d="M15 18.500h10.500V30a10.500 10.500 0 1 1-10.500-11.500z" />
        <circle cx={15} cy={29.500} r={6} />
        <path d="M10 34l-3 3M20 34l3 3" />
        <path d="M12.500 48h5L15 51z" fill="#212121" stroke="none" />
        <path d="M2 56.500h26M2 164.500h26" stroke="#5a5a5a" />
        <path d="M10 83q-2-4-6-8-2-2 0-3t5 4l-3-10q0-2 1.500-2T10 66l2 7-0.500-11q0.500-1.500 2-1.500t1.500 1.500l1 10 1.500-9q0.500-1.500 1.700-1t1 2.500L19.500 74l2.500-6q1-1.500 2-0.500t0.500 2.500L21 83z" />
        <path d="M4 90l13 13M19 89L4 104M4 94v-4h4M15 89h4v4M4 100v4h4" />
        <circle cx={19} cy={103.500} r={4.500} fill="#414141" />
        <path d="M22 107l5 5" strokeWidth={2.600} />
        <path d="M12.500 118h5L15 121z" fill="#212121" stroke="none" />
        <path d="M15 127l-3.500 4h2v18h4v-18h2z" />
        <path d="M12 136c-10 1-11 6-3 7h10c8-1 9-6-1-7M6 142l4-3v7z" />
        <path d="M12.500 156h5L15 159z" fill="#212121" stroke="none" />
        <path d="M3 169.500h6v6H3zM12 169.500h6v6h-6zM20.500 169.500h6v6h-6zM3.500 179h15v13h-15z" />
        <path d="M8 181.500v8l6-4z" fill="#212121" />
        <circle cx={25} cy={205} r={3.500} fill="#2a2a2a" />
        <path d="M23.500 205h3" stroke="#666" />
      </svg>
    </div>
  )
}

function DynamicInput() {
  const ref = useRef<HTMLInputElement>(null)

  useEffect(() => {
    ref.current?.focus()
    ref.current?.select()
  }, [])

  return (
    <label className="absolute top-[275px] left-[644px] flex items-start gap-[5px] text-black">
      <span className="h-[23px] w-[144px] bg-[#999999] pl-[3px] leading-[20px] whitespace-nowrap">指定缩放比例因子 &lt;1&gt;:</span>
      <input
        ref={ref}
        defaultValue="1"
        className="h-5 w-5 bg-white pl-[3px] outline-none selection:bg-[#0078d7] selection:text-white"
      />
    </label>
  )
}

const HISTORY = [
  { text: 'IMAGEATTACH', tone: 'bg-[#414141] text-[#a8a8a8]' },
  { text: '指定插入点 <0,0>:', tone: 'bg-[#4d4d4d] text-[#cdcdcd]' },
  { text: '基本图像大小: 宽: 1, 高: 0.934307, Millimeters', tone: 'bg-[#5c5c5c] text-[#f2f2f2]' },
]

function CommandLine() {
  return (
    <div className="absolute right-[274px] bottom-0 left-[274px] font-['Liberation_Mono','Noto_Sans_CJK_SC',monospace]">
      <div className="mb-1 flex flex-col items-start gap-[5px] pl-[62px]">
        {HISTORY.map((line) => (
          <p key={line.text} className={clsx('h-[15px] rounded-[2px] px-[2px] leading-[17px] whitespace-pre', line.tone)}>
            {line.text}
          </p>
        ))}
      </div>
      <div className="flex h-[26px] rounded-[2px] bg-[#2f3541] pb-px">
        <div className="flex w-14 items-center gap-[6px] pl-1">
          <svg width={5} height={18} viewBox="0 0 5 18" aria-hidden="true">
            <path d="M1 0v18M4 0v18" stroke="#e0e0e0" strokeWidth={2} strokeDasharray="2 1" />
          </svg>
          <button type="button" aria-label="关闭"><Ico w={9} h={10}><path d="M0.500 1l8 8M8.500 1l-8 8" stroke="#fff" strokeWidth={1.800} /></Ico></button>
          <button type="button" aria-label="自定义" className="pl-1">
            <Ico w={16} h={16}>
              <path d="M1.500 14.500l8-8" stroke="#eee" strokeWidth={2.600} />
              <path d="M8 7c-1-3 1-6 4-6l-1.500 3 2 2L15.500 4c0.500 3-2.500 5-5.500 4.500z" fill="#eee" stroke="none" />
            </Ico>
          </button>
        </div>
        <label className="flex flex-1 items-center bg-white pl-1 text-black">
          <Ico w={16} h={16}>
            <path d="M0 0h16v16H0z" fill="#8cc5ea" stroke="none" />
            <path d="M0 11q4-6 8 0 3-4 8 0v5H0z" fill="#3f86b8" stroke="none" />
            <circle cx={10} cy={5} r={2} fill="#fff0b0" stroke="none" />
          </Ico>
          <svg width={8} height={5} viewBox="0 0 8 5" className="ml-[2px]" aria-hidden="true"><path d="M0 0h8L4 5z" fill="#666" /></svg>
          <span className="pt-[3px] pl-[6px] font-bold">IMAGEATTACH</span>
          <span className="pt-[3px] pl-1 whitespace-pre">指定缩放比例因子 &lt;1&gt;:</span>
          <input type="text" aria-label="命令" className="h-full min-w-0 flex-1 pl-1 outline-none" />
          <svg width={8} height={5} viewBox="0 0 8 5" className="mr-[3px]" aria-hidden="true"><path d="M0 5h8L4 0z" fill="#555" /></svg>
        </label>
      </div>
    </div>
  )
}

function DrawingArea() {
  return (
    <main className="relative flex flex-1 justify-end overflow-hidden bg-black">
      <svg className="absolute inset-0 size-full" fill="none" stroke="#fff" shapeRendering="crispEdges" aria-hidden="true">
        <rect x={525.500} y={146.500} width={103} height={96} />
        <path d="M525.500 242.500L617 256.500" stroke="#f5b324" strokeDasharray="16 9" />
        <path d="M593 257.500h69M627.500 223v69" />
        <rect x={634.500} y={237.500} width={12} height={12} />
        <rect x={634} y={244} width={6} height={6} fill="#fff" stroke="none" />
        <path d="M872.500 242v50M872 292.500h51" />
        <rect x={868.500} y={287.500} width={9} height={9} />
        <path d="M874 225l6.500 7 6.500-7M880.500 232v6M927 278l13 13M940 278l-13 13" />
      </svg>

      <p className="absolute top-[6px] left-1 leading-4 text-white">[−][俯视][二维线框]</p>

      <div className="absolute top-[10px] right-[18px] flex gap-2">
        <button type="button" aria-label="最小化视口"><Ico w={12} h={11}><path d="M1 8h10" stroke="#fff" strokeWidth={3} /></Ico></button>
        <button type="button" aria-label="还原视口"><Ico w={12} h={11}><path d="M4 1.500h6.500V8" stroke="#ddd" strokeWidth={1.200} /><rect x={2} y={4} width={6} height={6} stroke="#fff" strokeWidth={2} /></Ico></button>
        <button type="button" aria-label="关闭视口"><Ico w={12} h={11}><path d="M2 1.500l8 8M10 1.500l-8 8" stroke="#fff" strokeWidth={2.500} /></Ico></button>
      </div>

      <ViewCube />
      <button type="button" className="absolute top-[159px] right-[51px] flex h-[17px] w-[48px] items-center gap-[5px] rounded-[4px] border border-[#a2a2aa] bg-[#84848c] pl-[3px] font-['Liberation_Sans',sans-serif] text-[12px] leading-[14px] text-[#33353a]">
        WCS
        <Ico w={8} h={6}><path d="M0.500 0.500h7L4 5z" stroke="#b5b5c0" strokeWidth={1} /></Ico>
      </button>
      <NavBar />
      <DynamicInput />
      <CommandLine />

      <div className="w-2 border-r-2 border-[#1fb6d8] bg-[#bdd0ec]">
        <div className="h-[90px] bg-linear-to-b from-[#afcbec] to-[#dcebf7]" />
      </div>
    </main>
  )
}

/* ---------- status bar ---------- */

function Cell({ title, on, children, className }: { title: string; on?: boolean; children: ReactNode; className?: string }) {
  return (
    <button type="button" aria-label={title} className={clsx('flex h-full items-center justify-center', on && 'bg-[#5c8fc6]', className ?? 'w-[22px]')}>
      {children}
    </button>
  )
}

function StatusGroup({ children, className }: { children: ReactNode; className?: string }) {
  return <div className={clsx('flex h-[23px] items-center bg-[#3b4453]', className)}>{children}</div>
}

function Compass({ dim }: { dim?: boolean }) {
  return (
    <Ico w={18} h={20}>
      <path d="M8 2l4 8 4 7-5-2.500L8 18l-3-3.500L0.500 17 5 10z" fill={GREY} stroke="none" />
      {!dim && <circle cx={14} cy={4.500} r={2} />}
    </Ico>
  )
}

function StatusBar() {
  return (
    <footer className="flex h-[28px] items-start border-t border-[#4a5059] bg-[#222933]">
      <div className="flex items-start pl-[13px]">
        <button type="button" className="h-[17px] w-[44px] rounded-b-[7px] bg-[#3b4453] leading-[17px] font-bold text-white">模型</button>
        <button type="button" className="ml-1 h-[17px] w-[49px] rounded-b-[7px] bg-[#2d3542] leading-[17px] text-[#b4b9c1]">布局1</button>
        <button type="button" className="ml-[5px] h-[17px] w-[49px] rounded-b-[7px] bg-[#2d3542] leading-[17px] text-[#b4b9c1]">布局2</button>
        <button type="button" aria-label="新建布局" className="ml-2 flex h-[16px] w-[21px] items-center justify-center rounded-tl-[7px] rounded-br-[7px] bg-[#2d3542]">
          <Ico w={9} h={9}><path d="M4.500 0.500v8M0.500 4.500h8" stroke="#a5a9b0" strokeWidth={1.800} /></Ico>
        </button>
      </div>

      <div className="relative ml-auto flex gap-[3px] pt-px pr-[3px]">
        <StatusGroup>
          <Cell title="模型空间" className="w-[27px] pl-[2px] font-bold whitespace-nowrap text-white">模型</Cell>
        </StatusGroup>
        <StatusGroup>
          <Cell title="栅格" className="w-6"><Ico w={16} h={16}><path d="M0 3.500h16M0 8h16M0 12.500h16M3.500 0v16M8 0v16M12.500 0v16" /></Ico></Cell>
          <Cell title="捕捉" className="w-6"><Ico w={14} h={14}><path d="M1 2h13M1 7h13M1 12h13" strokeWidth={2} strokeDasharray="2 3" /></Ico></Cell>
          <Cell title="捕捉设置" className="w-[15px]"><Caret big /></Cell>
        </StatusGroup>
        <StatusGroup>
          <Cell title="正交" className="w-[25px]"><Ico w={18} h={18}><path d="M1.500 1v15.500H17M1.500 10.500h5v5" /></Ico></Cell>
          <Cell title="极轴追踪" on><Ico w={18} h={18}><circle cx={7.500} cy={9} r={6.500} /><path d="M2 9.500h15M7.500 9.500l7-8" stroke="#fff" /><path d="M11 7v5" stroke="#fff" /></Ico></Cell>
          <Cell title="极轴设置" className="w-4"><Caret big /></Cell>
          <Cell title="等轴测草图" className="w-6"><Ico w={16} h={18}><path d="M2 2l12 13" stroke="#e06a6a" /><path d="M8 0v18" stroke={GREEN} /><circle cx={8} cy={8.500} r={1.500} /></Ico></Cell>
          <Cell title="等轴测设置" className="w-[15px]"><Caret big /></Cell>
        </StatusGroup>
        <StatusGroup>
          <Cell title="对象捕捉追踪" on><Ico w={18} h={18}><path d="M1.500 15.500L16 2M1 15.500h16" stroke="#fff" strokeWidth={1.400} /><rect x={6.500} y={7.500} width={3} height={3} fill="#fff" stroke="none" /></Ico></Cell>
          <span className="h-full w-[2px] bg-[#222933]" />
          <Cell title="对象捕捉" on><Ico w={18} h={18}><rect x={4} y={4} width={12} height={12} stroke="#fff" strokeWidth={1.400} /><rect x={1.500} y={1.500} width={4} height={4} fill="#5c8fc6" stroke="#fff" /></Ico></Cell>
          <Cell title="捕捉选项" className="w-[16px]"><Caret big /></Cell>
        </StatusGroup>
        <StatusGroup>
          <Cell title="注释可见性" on><Compass /></Cell>
          <Cell title="自动缩放" className="w-[25px]"><Compass /></Cell>
          <Cell title="注释比例图标" className="w-6"><Compass dim /></Cell>
          <Cell title="注释比例" className="w-6 text-white">1:1</Cell>
          <Cell title="比例列表" className="w-[9px]"><Caret big /></Cell>
        </StatusGroup>
        <StatusGroup>
          <Cell title="切换工作空间" className="w-6"><Ico w={16} h={16}><circle cx={8} cy={8} r={4} strokeWidth={4} /><circle cx={8} cy={8} r={6.500} strokeWidth={2.500} strokeDasharray="2.600 2.500" /></Ico></Cell>
          <Cell title="工作空间列表" className="w-[13px]"><Caret big /></Cell>
        </StatusGroup>
        <StatusGroup>
          <Cell title="注释监视器" className="w-6"><Ico w={16} h={16}><path d="M8 1v14M1 8h14" strokeWidth={2} /></Ico></Cell>
        </StatusGroup>
        <StatusGroup>
          <Cell title="隔离对象" className="w-6"><Ico w={18} h={20}><rect x={4} y={1} width={6} height={6} /><circle cx={14} cy={8.500} r={2.500} /><path d="M8 12l-3.500 6h7zM1 10h9" /></Ico></Cell>
        </StatusGroup>
        <StatusGroup>
          <Cell title="全屏显示" className="w-6"><Ico w={18} h={16}><path d="M9 2.500H1.500v11h15V8M9 9l7-7M11.500 1.500h5v5" /></Ico></Cell>
          <Cell title="自定义" className="w-6"><Ico w={16} h={16}><path d="M0 2h16M0 8h16M0 14h16" strokeWidth={2} /></Ico></Cell>
        </StatusGroup>
        <span className="pointer-events-none absolute -top-px right-4 font-['Liberation_Sans','Noto_Sans_CJK_SC',sans-serif] text-[19px] leading-[22px] whitespace-nowrap text-[#c9cbce]/80 [text-shadow:1px_1px_1px_#222]">
          CSDN @愚者黑科技工作室
        </span>
      </div>
    </footer>
  )
}

export default function App() {
  return (
    <div className="flex h-screen flex-col overflow-hidden bg-[#222933] font-['Noto_Sans','Noto_Sans_CJK_SC',sans-serif] text-[12px] leading-4">
      <header>
        <div className="relative flex min-h-[45px]">
          <div className="w-[45px] shrink-0">
            <AppButton />
          </div>
          <div className="flex min-w-0 flex-1 flex-col justify-between">
            <TitleBar />
            <RibbonTabs />
          </div>
          <div className="absolute top-0 right-[102px] left-[102px] h-[3px] border-b border-[#c9ccd1] bg-white" />
        </div>

        <div className="flex gap-px pl-[2px]">
          <DrawPanel />
          <ModifyPanel />
          <AnnotatePanel />
          <LayerPanel />
          <BlockPanel />
          <PropertyPanel />
          <GroupPanel />
          <UtilPanel />
          <ClipboardPanel />
          <Panel title="视图" launcher className="w-[60px]">
            <BigButton className="w-full" label="基点" caret icon={
              <Ico w={36} h={38}><path d="M2 7h14v10h18v14H2z" fill={GREY} stroke="none" /></Ico>
            } />
          </Panel>
        </div>

        <DocTabs />
        <div className="h-1 bg-[#3b4453]" />
      </header>
      <DrawingArea />
      <StatusBar />
      <div className="h-[2px] bg-[#1c1d20] pl-[100px]">
        <div className="h-full w-12 bg-[#4a4a4a]" />
      </div>
    </div>
  )
}
